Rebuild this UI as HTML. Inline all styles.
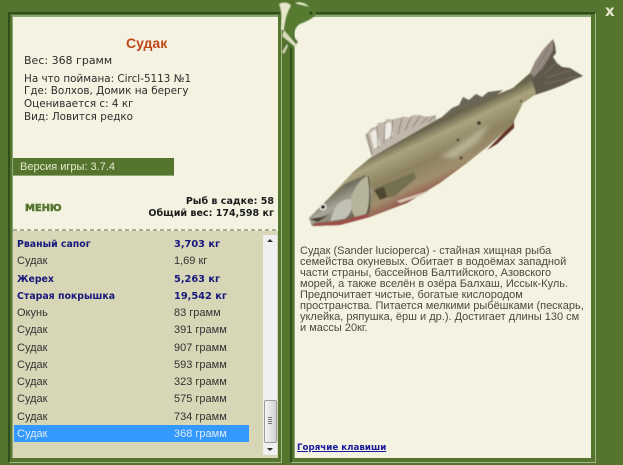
<!DOCTYPE html>
<html><head><meta charset="utf-8">
<style>
html,body{margin:0;padding:0;background:#55752f}
#p{position:relative;width:623px;height:465px;overflow:hidden;background:#55752f;font-family:"DejaVu Sans",sans-serif;font-size:10.4px;color:#333;filter:blur(.3px)}
.a{position:absolute;white-space:nowrap}
.f{position:absolute;box-sizing:border-box;background:#55752f;border-top:2px solid #2f4e1c;border-left:2px solid #2f4e1c;border-right:1px solid #a4b98a;border-bottom:1px solid #a4b98a}
.i{position:absolute;box-sizing:border-box;background:#f4f3e1;border-top:2px solid #8fa87a;border-left:1px solid #8fa87a}
.r{position:absolute;left:0;width:623px;height:17px;line-height:17px;font-family:"Liberation Sans",sans-serif;font-size:11px}
.r span{position:absolute;white-space:nowrap}
.r .n{left:17px}.r .w{left:174px}
.b{font-family:"DejaVu Sans",sans-serif;font-weight:bold;color:#17177c}
.n.b{font-size:9.4px}.w.b{font-size:9.8px}
</style></head><body>
<div id="p">
<!-- frames -->
<div class="f" style="left:8px;top:12px;width:274px;height:451px"></div>
<div class="i" style="left:12px;top:15px;width:266px;height:443px"></div>
<div class="f" style="left:290px;top:12px;width:306px;height:451px"></div>
<div class="i" style="left:294px;top:15px;width:297px;height:443px"></div>

<!-- left info -->
<div class="a" style="left:126px;top:35px;font:bold 14px 'Liberation Sans',sans-serif;color:#bf4619">Судак</div>
<div class="a" style="left:24px;top:53px;font-size:11px;line-height:15px;color:#2c2c2c">Вес: 368 грамм</div>
<div class="a" style="left:24px;top:72.5px;line-height:12.8px;color:#2c2c2c">На что поймана: Circl-5113 №1<br>Где: Волхов, Домик на берегу<br>Оценивается с: 4 кг<br>Вид: Ловится редко</div>
<div class="a" style="left:13px;top:158px;width:161px;height:17px;background:#55752f;border-bottom:1px solid #8fa675"></div>
<div class="a" style="left:20px;top:161px;font:11px/13px 'Liberation Sans',sans-serif;color:#e6ead0">Версия игры: 3.7.4</div>
<div class="a" style="left:25px;top:203px;font:900 10px/12px 'DejaVu Sans',sans-serif;color:#55752f;-webkit-text-stroke:.5px #55752f;letter-spacing:-.1px">МЕНЮ</div>
<div class="a" style="right:349px;top:196px;font-weight:bold;font-size:9.55px;line-height:11.5px;text-align:right;color:#1c1c1c">Рыб в садке: 58<br>Общий вес: 174,598 кг</div>

<!-- list -->
<div class="a" style="left:13px;top:229px;width:265px;height:2px;background:repeating-linear-gradient(90deg,#a9ae8c 0 4px,#f4f3e1 4px 7px)"></div>
<div class="a" style="left:13px;top:231px;width:265px;height:227px;background:#d7d6b7"></div>
<div class="a" style="left:14px;top:425px;width:235px;height:17px;background:#3399ff"></div>
<div class="r" style="top:236px"><span class="n b">Рваный сапог</span><span class="w b">3,703 кг</span></div>
<div class="r" style="top:253.3px"><span class="n">Судак</span><span class="w">1,69 кг</span></div>
<div class="r" style="top:270.5px"><span class="n b">Жерех</span><span class="w b">5,263 кг</span></div>
<div class="r" style="top:287.8px"><span class="n b">Старая покрышка</span><span class="w b">19,542 кг</span></div>
<div class="r" style="top:305px"><span class="n">Окунь</span><span class="w">83 грамм</span></div>
<div class="r" style="top:322.3px"><span class="n">Судак</span><span class="w">391 грамм</span></div>
<div class="r" style="top:339.6px"><span class="n">Судак</span><span class="w">907 грамм</span></div>
<div class="r" style="top:356.9px"><span class="n">Судак</span><span class="w">593 грамм</span></div>
<div class="r" style="top:374.2px"><span class="n">Судак</span><span class="w">323 грамм</span></div>
<div class="r" style="top:391.4px"><span class="n">Судак</span><span class="w">575 грамм</span></div>
<div class="r" style="top:408.7px"><span class="n">Судак</span><span class="w">734 грамм</span></div>
<div class="r" style="top:426px;color:#dfeaf5"><span class="n">Судак</span><span class="w">368 грамм</span></div>

<!-- scrollbar -->
<div class="a" style="left:263px;top:235px;width:14px;height:220px;background:#f0f0f0"></div>
<div class="a" style="left:264px;top:400px;width:11px;height:41px;border:1px solid #9a9a9a;border-radius:2px;background:linear-gradient(90deg,#f4f4f4,#d2d2d2)"></div>
<div class="a" style="left:268px;top:417px;width:4px;height:7px;background:repeating-linear-gradient(180deg,#777 0 1px,transparent 1px 2px)"></div>
<svg class="a" style="left:263px;top:235px" width="14" height="220"><path d="M4 7L7 4L10 7Z M4 213L10 213L7 216Z" fill="#333"/></svg>

<!-- right text -->
<div class="a" style="left:300px;top:245.5px;font:11px/11.1px 'Liberation Sans',sans-serif;color:#4a4a40">Судак (Sander lucioperca) - стайная хищная рыба<br>семейства окуневых. Обитает в водоёмах западной<br>части страны, бассейнов Балтийского, Азовского<br>морей, а также вселён в озёра Балхаш, Иссык-Куль.<br>Предпочитает чистые, богатые кислородом<br>пространства. Питается мелкими рыбёшками (пескарь,<br>уклейка, ряпушка, ёрш и др.). Достигает длины 130 см<br>и массы 20кг.</div>
<div class="a" style="left:297px;top:442px;font-weight:bold;font-size:8.7px;line-height:12px;color:#1a1a9c;text-decoration:underline">Горячие клавиши</div>

<!-- X -->
<div class="a" style="left:605px;top:3px;font:900 15px/17px 'DejaVu Sans',sans-serif;color:#e3e6c8">x</div>

<!-- lizard -->
<svg class="a" style="left:270px;top:0;filter:blur(.5px)" width="60" height="60" viewBox="270 0 60 60">
<path d="M283 50C287 40 286 30 288 20L296 14L300 16L292 28V48Z" fill="#4c6c2c"/>
<path d="M283 10C285 20 288 30 298 42L294 46C286 36 282 26 280 12Z" fill="#4c6c2c"/>
<path d="M298 1C306 0 314 6 316 14C312 20 304 22 300 24C296 26 294 32 292 38L285 30C285 16 290 6 298 1Z" fill="#557a30"/>
<path d="M279 4C284 1 290 3 291 6C287 12 285 20 284 30L281 30C282 20 282 12 279 4Z" fill="#e6e6cb"/>
<path d="M295 3C300 1 306 3 309 7C304 5 299 5 295 3Z" fill="#e6e6cb"/>
<path d="M284 30L297 45L295 47L282 36Z" fill="#d8dcbc"/>
<path d="M282 52L287 44L288 46L284 54Z" fill="#d8dcbc"/>
<circle cx="311" cy="13" r="1.3" fill="#1c2c10"/>
</svg>

<!-- fish -->
<svg class="a" style="left:295px;top:30px" width="296" height="205" viewBox="295 30 296 205">
<defs>
<linearGradient id="body" gradientUnits="userSpaceOnUse" x1="425" y1="112" x2="458" y2="182">
<stop offset="0" stop-color="#5e5845"/>
<stop offset=".2" stop-color="#69634b"/>
<stop offset=".34" stop-color="#ada680"/>
<stop offset=".58" stop-color="#8d8360"/>
<stop offset=".8" stop-color="#a2906f"/>
<stop offset=".92" stop-color="#9a6756"/>
<stop offset="1" stop-color="#84403a"/>
</linearGradient>
<linearGradient id="head" gradientUnits="userSpaceOnUse" x1="335" y1="185" x2="355" y2="225">
<stop offset="0" stop-color="#5f5b4a"/>
<stop offset=".45" stop-color="#a9a79a"/>
<stop offset=".8" stop-color="#6d6855"/>
<stop offset="1" stop-color="#a5635c"/>
</linearGradient>
<clipPath id="bc"><path d="M309 218L327 200L353 172L370 158L440 118L513 88L530 73L536 94L523 103L512 125L487 147L467 163L440 183L407 203L370 217L340 225L312 226Z"/></clipPath>
<filter id="s"><feGaussianBlur stdDeviation=".45"/></filter>
<filter id="s2"><feGaussianBlur stdDeviation="2.5"/></filter>
<filter id="n" x="0" y="0" width="100%" height="100%"><feTurbulence type="fractalNoise" baseFrequency=".7" numOctaves="2" seed="4"/><feColorMatrix values="0 0 0 0 .25  0 0 0 0 .22  0 0 0 0 .14  0 0 0 1.6 -.75"/></filter>
</defs>
<g filter="url(#s)">
<!-- dorsal fins -->
<path d="M371.7 156.7L365 135L368.3 131.7L371 128.3L377.3 126L377.3 123.3L385 121.7L386 119.3L393.3 119.3L403.3 116.7L410 117.3L411.7 115.3L420 115L426.7 116.7L436 115L436.7 121.7L430 126L406.7 136.7L390 146.7Z" fill="#c0b7aa"/>
<path d="M374 149L370 133L376 129L380 145Z M385 140L384 124L391 122L393 135Z" fill="#eceae2"/>
<path d="M372 155L367 134M378 148L377 126M384 143L385 122M391 139L393 120M398 134L402 118M405 131L411 117M413 127L420 116M421 124L428 117M428 122L435 116" stroke="#7e7568" stroke-width=".8" fill="none"/>
<path d="M442 117L452 108L459 105L463 97L469 100L476 94L482 97L488 92L503 90L493 98L470 108L448 118Z" fill="#6b6656"/>
<!-- ventral fin -->
<path d="M487 150L510 126L514 120L514 128L497 144Z" fill="#633229"/>
<!-- tail -->
<path d="M530 73L535 62L543 50L553 39L555 45L556 53L553 57L557 63L562 67L570 68L583 76L573 80L563 85L550 90L535 95Z" fill="#5f594b"/>
<path d="M530 73L535 62L543 50L553 39L553 50L548 60L542 68L534 77Z" fill="#95897f"/>
<path d="M537 68L550 44M541 71L553 50M544 74L557 63M546 78L571 70M545 84L578 76" stroke="#7a7266" stroke-width=".7" fill="none"/>
<!-- body -->
<path d="M309 218L327 200L353 172L370 158L440 118L513 88L530 73L536 94L523 103L512 125L487 147L467 163L440 183L407 203L370 217L340 225L312 226Z" fill="url(#body)"/>
<g clip-path="url(#bc)">
<rect x="300" y="70" width="240" height="160" filter="url(#n)" opacity=".55"/>
</g>
<path d="M440 157L480 130L490 125L478 142L455 158Z" fill="#c9c5aa" opacity=".7" filter="url(#s2)"/>
<!-- head -->
<path d="M309 218L327 200L345 184L365 175L372 190L370 214L340 225L312 226Z" fill="url(#head)"/>
<path d="M349 205C352 192 358 180 368 176L370 195C370 204 368 210 366 214L355 217Z" fill="#b6b49a"/>
<path d="M335 208C340 200 348 198 351 200C353 208 350 216 344 219L330 221Z" fill="#c2c1b6"/>
<path d="M368 176C371 190 370 205 367 214" stroke="#3c3828" stroke-width="1" fill="none"/>
<!-- side marks -->
<path d="M376 188L414 172L416 178L395 196L382 199Z" fill="#75704f"/>
<path d="M397 201L430 190L420 196L400 203Z" fill="#d8c4b2"/>
<path d="M374 190L384 187L387 197L380 200Z" fill="#4e4630"/>
<circle cx="479" cy="123" r="1.8" fill="#333024"/>
<circle cx="458" cy="140" r="1.5" fill="#544f38"/>
<circle cx="461" cy="158" r="1.6" fill="#5f4a38"/>
<circle cx="521" cy="101" r="1" fill="#333024"/>
<!-- eye -->
<circle cx="323" cy="207" r="3.6" fill="#e5e4da"/>
<circle cx="323" cy="207" r="1.9" fill="#1f1c14"/>
<path d="M309 219L322 217L330 214L318 222Z" fill="#4b4336"/>
<path d="M312 226L340 225L370 217L366 214L340 221L315 223Z" fill="#9c4f4a"/>
</g>
</svg>
</div>
</body></html>
